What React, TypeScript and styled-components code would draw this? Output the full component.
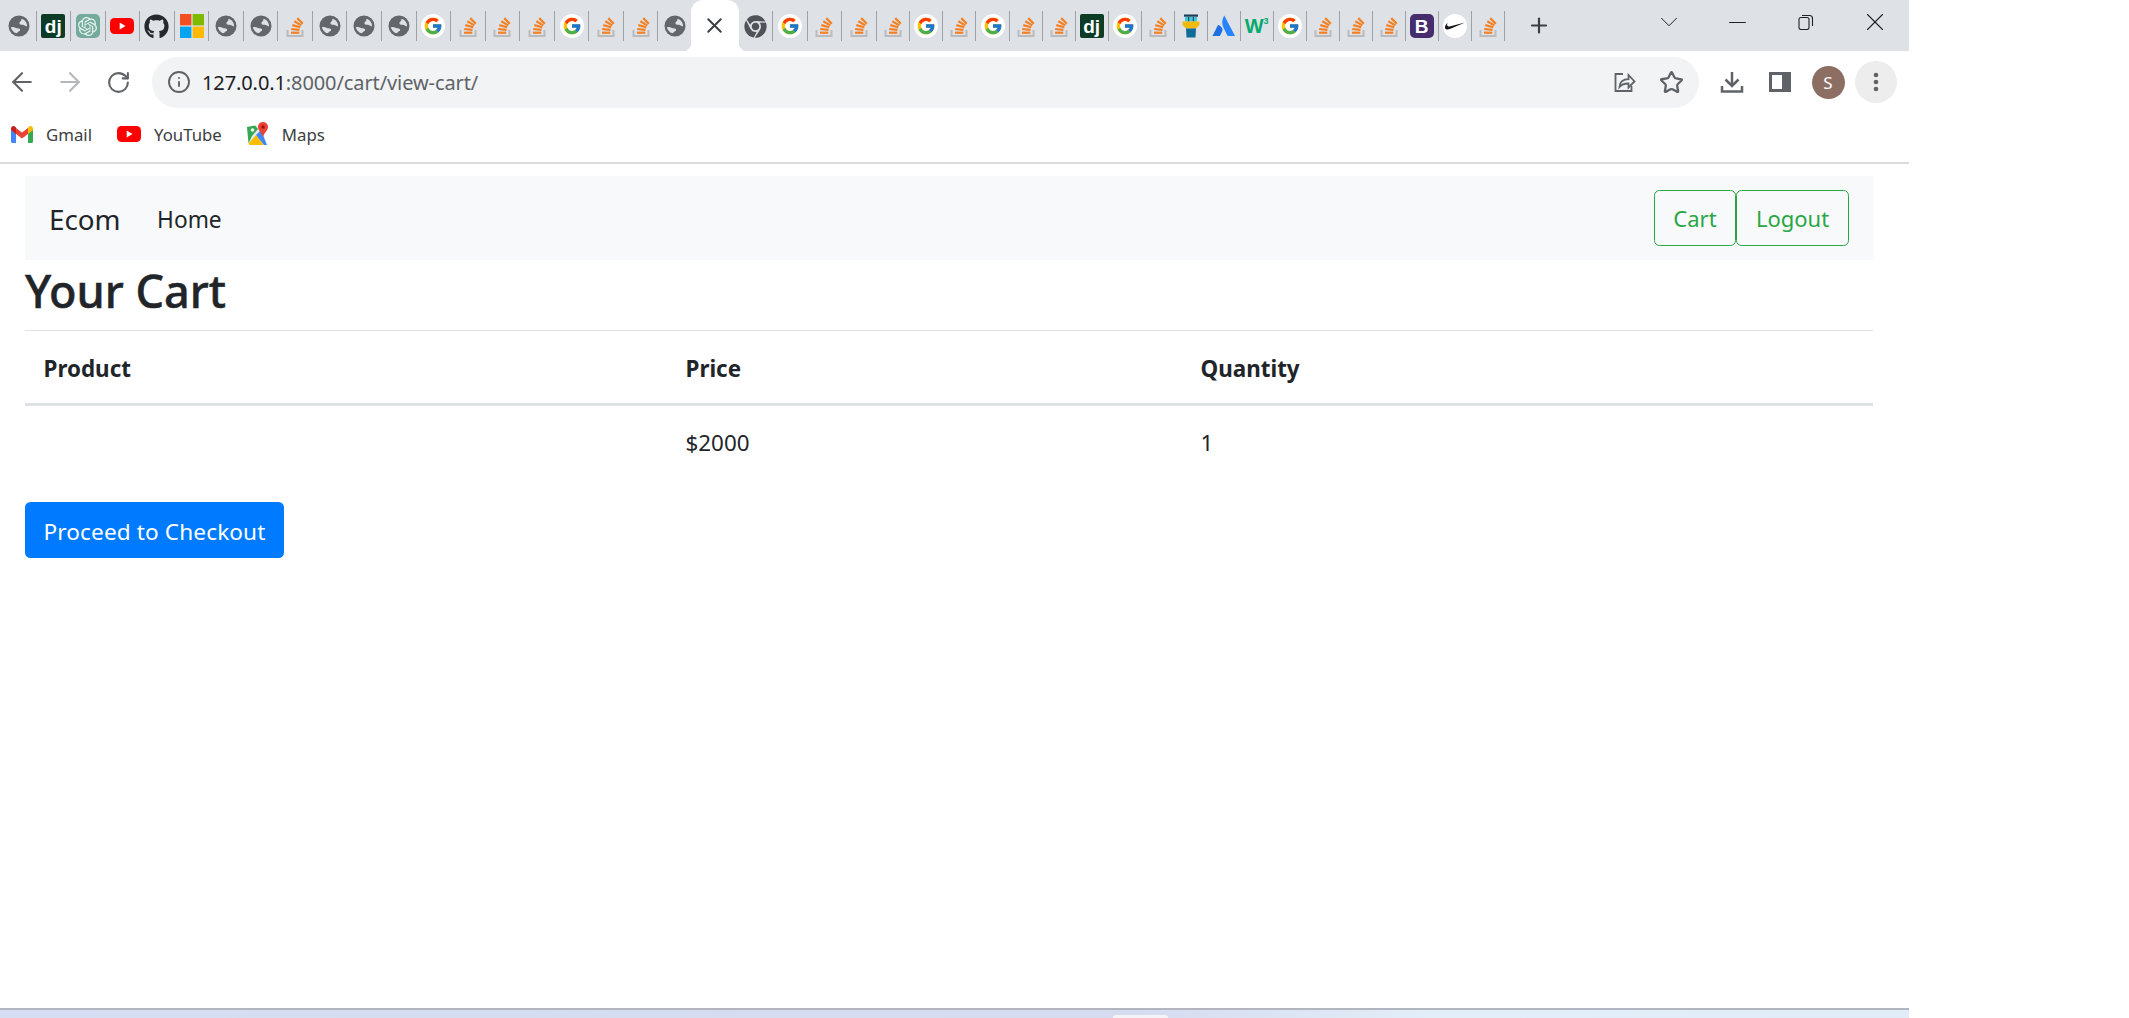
import React from "react";
import styled, { createGlobalStyle } from "styled-components";
import { ArrowLeft, ArrowRight, RotateCw, Info, Star, ChevronDown, Minus, X, Plus } from "lucide-react";
import { FcGoogle } from "react-icons/fc";
import { FaGithub, FaChrome } from "react-icons/fa";
import { SiOpenai, SiNike } from "react-icons/si";

const Global = createGlobalStyle`
  html, body { margin: 0; padding: 0; background: #fff; }
  body { font-family: "Noto Sans", "Open Sans", sans-serif; color: #212529; overflow: hidden; }
`;

const Screen = styled.div`
  width: 1909px; height: 1018px; display: flex; flex-direction: column; background: #fff;
`;
const TabStrip = styled.div`
  height: 51px; flex: none; display: flex; align-items: flex-start; background: #dee1e6; padding-left: 2px;
`;
const Tab = styled.div<{ $w: number }>`
  width: ${(p) => p.$w}px; height: 30px; margin-top: 11px; flex: none; box-sizing: border-box;
  display: flex; align-items: center; justify-content: center; border-right: 1px solid #9ea2a7;
`;
const ActiveTab = styled.div`
  width: 48px; height: 51px; flex: none; margin-left: -2px; background: #fff; border-radius: 12px 12px 0 0;
  display: flex; align-items: center; justify-content: center; color: #3c4043; position: relative;
  &::before, &::after { content: ""; position: absolute; bottom: 0; width: 8px; height: 8px; }
  &::before { left: -8px; background: radial-gradient(circle at 0 0, #dee1e6 8px, #fff 8.5px); }
  &::after { right: -8px; background: radial-gradient(circle at 100% 0, #dee1e6 8px, #fff 8.5px); }
`;
const NewTab = styled.div`
  width: 24px; height: 30px; margin: 10px 0 0 22px; display: flex; align-items: center; justify-content: center; color: #3c4043;
`;
const WindowControls = styled.div`
  margin-left: auto; display: flex; height: 44px; color: #202124;
`;
const WinButton = styled.div`
  width: 68.7px; display: flex; align-items: center; justify-content: center;
`;
const Toolbar = styled.div`
  height: 62px; flex: none; display: flex; align-items: center; background: #fff;
`;
const NavIcon = styled.div<{ $off?: boolean }>`
  width: 48px; height: 48px; flex: none; display: flex; align-items: center; justify-content: center;
  color: ${(p) => (p.$off ? "#b5b7ba" : "#5f6368")};
  &:first-child { margin-left: -2px; }
`;
const Omnibox = styled.div`
  width: 1547px; height: 51px; margin-left: 10px; flex: none; box-sizing: border-box; border-radius: 26px; background: #f1f3f4;
  display: flex; align-items: center; padding-left: 15px; color: #5f6368;
`;
const Url = styled.div`
  margin-left: 11px; font-size: 20px; color: #5f6368; white-space: nowrap; letter-spacing: -0.1px;
  b { font-weight: 400; color: #202124; }
`;
const OmniActions = styled.div`
  margin-left: auto; display: flex; align-items: center; gap: 23px; padding-right: 15px; color: #5f6368;
`;
const RightTools = styled.div`
  display: flex; align-items: center; margin-left: 9px; color: #5f6368;
`;
const ToolSlot = styled.div`
  width: 48px; height: 48px; display: flex; align-items: center; justify-content: center;
`;
const Avatar = styled.div`
  width: 33px; height: 33px; border-radius: 50%; background: #8d6e63; color: #fff; font-size: 17px;
  display: flex; align-items: center; justify-content: center;
`;
const MenuCircle = styled.div`
  width: 42px; height: 42px; border-radius: 50%; background: #ededed; display: flex; align-items: center; justify-content: center;
`;
const Bookmarks = styled.div`
  height: 49px; flex: none; display: flex; align-items: center; padding-left: 11px; gap: 25px;
  border-bottom: 2px solid #dcdcdc;
  & > * { margin-bottom: 7px; }
`;
const Bookmark = styled.div`
  display: flex; align-items: center; gap: 13px; font-size: 16.8px; color: #3c4043;
`;
const Page = styled.main`
  flex: 1; min-height: 0; padding: 12px 36px 0 25px;
`;
const Navbar = styled.nav`
  height: 84px; box-sizing: border-box; background: #f8f9fa; display: flex; align-items: center; padding: 0 24px;
`;
const Brand = styled.div`
  font-size: 27.8px; color: #212529; margin-right: 36.5px; padding-top: 2px;
`;
const NavLink = styled.div`
  font-size: 22.7px; color: #212529; padding-top: 2px;
`;
const NavActions = styled.div`
  margin-left: auto; display: flex;
`;
const OutlineButton = styled.div<{ $w: number }>`
  width: ${(p) => p.$w}px; height: 56px; box-sizing: border-box; border: 1.4px solid #28a745; border-radius: 5.5px;
  color: #28a745; font-size: 22px; display: flex; align-items: center; justify-content: center;
`;
const Title = styled.h2`
  margin: 0; font-size: 45px; font-weight: 500; height: 70px; line-height: 62px; color: #212529; -webkit-text-stroke: 0.5px #212529;
`;
const CartTable = styled.table`
  width: 100%; border-collapse: collapse; table-layout: fixed; font-size: 22.4px; color: #212529;
`;
const HeadCell = styled.th<{ $w?: number }>`
  width: ${(p) => (p.$w ? `${p.$w}px` : "auto")}; height: 74px; box-sizing: border-box; padding: 2px 18.5px 0; text-align: left; font-weight: 700;
  border-top: 1.4px solid #dee2e6; border-bottom: 3px solid #dee2e6;
`;
const Cell = styled.td`
  height: 75px; box-sizing: border-box; padding: 0 18.5px;
`;
const Checkout = styled.div`
  margin-top: 22.5px; width: 259px; height: 56px; box-sizing: border-box; padding-top: 2px; border-radius: 5.5px; background: #007bff; color: #fff;
  font-size: 22.6px; letter-spacing: 0.12px; display: flex; align-items: center; justify-content: center;
`;
const Taskbar = styled.div`
  height: 10px; flex: none; box-sizing: border-box; border-top: 2px solid #b0b5c0; position: relative;
  background: linear-gradient(90deg, #d5def2 0%, #d6dcf0 60%, #e2eef8 75%, #e0ecf8 100%);
`;
const TaskItem = styled.div`
  position: absolute; left: 1113px; width: 55px; top: 5px; height: 3px; background: #f4f4f8; border-radius: 3px 3px 0 0;
`;
const Badge = styled.div<{ $bg: string; $r?: number }>`
  width: 24px; height: 24px; background: ${(p) => p.$bg}; border-radius: ${(p) => p.$r ?? 2}px; color: #fff;
  display: flex; align-items: center; justify-content: center;
`;
const BadgeText = styled.span<{ $size: number }>`
  font-size: ${(p) => p.$size}px; font-weight: 700; line-height: 1; font-family: "Liberation Sans", sans-serif;
`;
const RoundWhite = styled.div`
  width: 24px; height: 24px; border-radius: 50%; background: #fff; display: flex; align-items: center; justify-content: center;
`;
const W3 = styled.span`
  font: 700 20px/1 "Liberation Sans", sans-serif; color: #04aa6d; letter-spacing: -1px;
  sup { font-size: 9px; vertical-align: 9px; line-height: 0; letter-spacing: 0; margin-left: 1px; }
`;

const Globe = () => (
  <svg width="24" height="24" viewBox="0 0 24 24">
    <circle cx="12" cy="12" r="10.5" fill="#63666b" />
    <path d="M14.5 4.8c2.500.6 4.400 2.500 5.200 5 .3 1.200.3 1.800.3 2.700-2-.4-2.800-1.800-4.600-1.700-1.600.1-2.800-.4-3-1.600-.2-1.300 1.400-1.700 1.800-2.800z" fill="#dee1e6" />
    <path d="M3.900 13.200c1.600-.4 3.200-.2 4.600.6 1.400.8 3 .4 4.200 1.200.8.600.6 1.600-.3 2.100-.9.400-1.500 1.200-2.300 1.900-1 .5-2.200-.3-3.200-1-1.500-1.100-2.500-2.900-3-4.800z" fill="#dee1e6" />
  </svg>
);
const StackO = () => (
  <svg width="24" height="24" viewBox="0 0 24 24">
    <path d="M4.500 16v6h15v-6" fill="none" stroke="#bcbbbb" strokeWidth="2" />
    <g stroke="#f48024" strokeWidth="2.200" fill="none">
      <path d="M8 18.700h8.300" />
      <path d="M8.200 15l8.300.8" />
      <path d="M9.300 11.100l8 2.200" />
      <path d="M11.300 7.300l7 4.100" />
      <path d="M14.200 4.100l5.600 5.600" />
    </g>
  </svg>
);
const Google = () => (
  <RoundWhite>
    <FcGoogle size={20} />
  </RoundWhite>
);
const YouTube = () => (
  <svg width="24" height="24" viewBox="0 0 24 24">
    <rect x="0" y="4" width="24" height="16" rx="4.500" fill="#f00" />
    <path d="M9.700 8.600v6.800l5.800-3.400z" fill="#fff" />
  </svg>
);
const Microsoft = () => (
  <svg width="24" height="24" viewBox="0 0 24 24">
    <rect width="11.400" height="11.400" fill="#f25022" />
    <rect x="12.600" width="11.400" height="11.400" fill="#7fba00" />
    <rect y="12.600" width="11.400" height="11.400" fill="#00a4ef" />
    <rect x="12.600" y="12.600" width="11.400" height="11.400" fill="#ffb900" />
  </svg>
);
const Tower = () => (
  <svg width="24" height="24" viewBox="0 0 24 24">
    <rect x="5" y="0.500" width="14" height="2.200" fill="#1a3c5a" />
    <rect x="6" y="3" width="12" height="4.500" fill="#3ec8d8" />
    <rect x="9" y="3" width="1.200" height="4.500" fill="#1a4a66" />
    <rect x="13.800" y="3" width="1.200" height="4.500" fill="#1a4a66" />
    <path d="M3.500 7.500h17v3.500l-3.500 3.500H7L3.500 11z" fill="#f2b90f" />
    <path d="M7 14.500h10l-.5 9h-9z" fill="#0f6c98" />
  </svg>
);
const Atlassian = () => (
  <svg width="24" height="24" viewBox="0 0 24 24">
    <path d="M12.300 1.500c-2.500 4-2.800 8.200-.7 12.500l4 8h7.400z" fill="#2684ff" />
    <path d="M7 11.300c-.4-.5-1-.4-1.300.2L.5 22h7.300l2.400-4.800c.8-1.800.2-4-3.200-5.900z" fill="#1d6fe6" />
  </svg>
);
const Gmail = () => (
  <svg width="22" height="17" viewBox="0 0 22 17">
    <path d="M0 3v12.500C0 16.300.7 17 1.500 17H5V7z" fill="#4285f4" />
    <path d="M22 3v12.500c0 .8-.7 1.500-1.500 1.500H17V7z" fill="#34a853" />
    <path d="M5 8V2l6 4.500L17 2v6l-6 4.500z" fill="#ea4335" />
    <path d="M0 2.500C0 .6 2.200-.6 3.800.6L5 1.500V8L0 4z" fill="#c5221f" />
    <path d="M22 2.500c0-1.900-2.200-3.100-3.800-1.900L17 1.500V8l5-4z" fill="#fbbc04" />
  </svg>
);
const Maps = () => (
  <svg width="22" height="24" viewBox="0 0 22 24">
    <path d="M0 5l14-2v20H3z" fill="#e8eaed" />
    <path d="M0 5l8-1.500 3 3.500-6 7-3.500 7.500z" fill="#34a853" />
    <circle cx="5.500" cy="8" r="1.800" fill="#fff" />
    <path d="M1.500 21.500L9 13l8 10H2.500z" fill="#fbbc04" />
    <path d="M9 13l5-5 6 15h-3z" fill="#4285f4" />
    <path d="M16 0c-3 0-5 2.300-5 5 0 3.500 3.800 5.500 5 10 1.200-4.500 5-6.500 5-10 0-2.700-2-5-5-5z" fill="#ea4335" />
    <circle cx="16" cy="5" r="1.800" fill="#a50e0e" />
  </svg>
);
const Share = () => (
  <svg width="24" height="24" viewBox="0 0 24 24" fill="none" stroke="#5f6368" strokeWidth="1.800">
    <path d="M11 4H3.500v17h16v-5" />
    <path d="M7.500 17c.4-5 4-7.800 9-7.800V5l6 6.500-6 6v-4c-3.800-.2-6.800 1-9 3.500z" />
  </svg>
);
const Download = () => (
  <svg width="24" height="24" viewBox="0 0 24 24" fill="none" stroke="#5f6368" strokeWidth="2.500">
    <path d="M12 2v13M5.500 9.500L12 16l6.500-6.500" />
    <path d="M2 16v5.500h20V16" />
  </svg>
);
const SidePanel = () => (
  <svg width="22" height="22" viewBox="0 0 22 22">
    <path fillRule="evenodd" d="M0 1h22v20H0z M3 4v14h10V4z" fill="#5f6368" />
  </svg>
);
const Dots = () => (
  <svg width="6" height="20" viewBox="0 0 6 20" fill="#5f6368">
    <circle cx="3" cy="3" r="2.300" />
    <circle cx="3" cy="10" r="2.300" />
    <circle cx="3" cy="17" r="2.300" />
  </svg>
);
const Restore = () => (
  <svg width="16" height="16" viewBox="0 0 16 16" fill="none" stroke="#202124" strokeWidth="1.100">
    <rect x="1" y="3.500" width="10" height="12" rx="2" />
    <path d="M4 1.500h7.500a3 3 0 0 1 3 3V12" />
  </svg>
);

const icons: Record<string, React.ReactNode> = {
  g: <Globe />,
  s: <StackO />,
  G: <Google />,
  dj: <Badge $bg="#0c3c26"><BadgeText $size={19}>dj</BadgeText></Badge>,
  ai: <Badge $bg="#74aa9c" $r={5}><SiOpenai size={19} color="#e8f4f0" /></Badge>,
  yt: <YouTube />,
  gh: <FaGithub size={25} color="#24292e" />,
  ms: <Microsoft />,
  ch: <FaChrome size={23} color="#505357" />,
  tw: <Tower />,
  at: <Atlassian />,
  w3: <W3>W<sup>3</sup></W3>,
  B: <Badge $bg="#452d6e" $r={5}><BadgeText $size={19}>B</BadgeText></Badge>,
  nk: <RoundWhite><SiNike size={20} color="#111" /></RoundWhite>,
};

const before = "g dj ai yt gh ms g g s g g g G s s s G s s g".split(" ");
const after: [string, number][] = [
  ["ch", 33.6], ["G", 35], ["s", 34.4], ["s", 34.6], ["s", 33.4], ["G", 33.4], ["s", 33.2], ["G", 33.2], ["s", 33], ["s", 33], ["dj", 33], ["G", 33],
  ["s", 33], ["tw", 33], ["at", 33], ["w3", 33], ["G", 33], ["s", 33], ["s", 33], ["s", 33], ["B", 33], ["nk", 33], ["s", 33],
];

export default function App() {
  return (
    <Screen>
      <Global />
      <TabStrip>
        {before.map((k, i) => (
          <Tab key={i} $w={34.55}>{icons[k]}</Tab>
        ))}
        <ActiveTab><X size={25} strokeWidth={1.9} /></ActiveTab>
        {after.map(([k, w], i) => (
          <Tab key={i} $w={w}>{icons[k]}</Tab>
        ))}
        <NewTab><Plus size={31} strokeWidth={2.2} /></NewTab>
        <WindowControls>
          <WinButton><ChevronDown size={30} strokeWidth={0.8} /></WinButton>
          <WinButton><Minus size={27} strokeWidth={1} /></WinButton>
          <WinButton><Restore /></WinButton>
          <WinButton><X size={30} strokeWidth={0.9} /></WinButton>
        </WindowControls>
      </TabStrip>
      <Toolbar>
        <NavIcon><ArrowLeft size={30} strokeWidth={1.7} /></NavIcon>
        <NavIcon $off><ArrowRight size={30} strokeWidth={1.7} /></NavIcon>
        <NavIcon><RotateCw size={25} strokeWidth={2} /></NavIcon>
        <Omnibox>
          <Info size={24} strokeWidth={1.9} />
          <Url><b>127.0.0.1</b>:8000/cart/view-cart/</Url>
          <OmniActions>
            <Share />
            <Star size={25} strokeWidth={2.2} />
          </OmniActions>
        </Omnibox>
        <RightTools>
          <ToolSlot><Download /></ToolSlot>
          <ToolSlot><SidePanel /></ToolSlot>
          <ToolSlot><Avatar>S</Avatar></ToolSlot>
          <ToolSlot><MenuCircle><Dots /></MenuCircle></ToolSlot>
        </RightTools>
      </Toolbar>
      <Bookmarks>
        <Bookmark><Gmail />Gmail</Bookmark>
        <Bookmark><YouTube />YouTube</Bookmark>
        <Bookmark><Maps />Maps</Bookmark>
      </Bookmarks>
      <Page>
        <Navbar>
          <Brand>Ecom</Brand>
          <NavLink>Home</NavLink>
          <NavActions>
            <OutlineButton $w={82}>Cart</OutlineButton>
            <OutlineButton $w={113}>Logout</OutlineButton>
          </NavActions>
        </Navbar>
        <Title>Your Cart</Title>
        <CartTable>
          <thead>
            <tr>
              <HeadCell $w={642}>Product</HeadCell>
              <HeadCell $w={515}>Price</HeadCell>
              <HeadCell>Quantity</HeadCell>
            </tr>
          </thead>
          <tbody>
            <tr>
              <Cell />
              <Cell>$2000</Cell>
              <Cell>1</Cell>
            </tr>
          </tbody>
        </CartTable>
        <Checkout>Proceed to Checkout</Checkout>
      </Page>
      <Taskbar><TaskItem /></Taskbar>
    </Screen>
  );
}
